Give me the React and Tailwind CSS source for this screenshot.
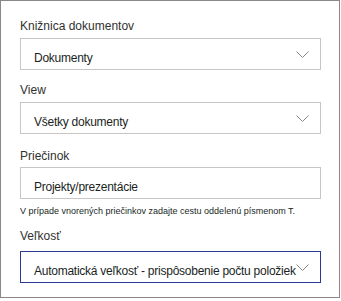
import React from 'react';

const font = { fontFamily: '"Liberation Sans", Arial, sans-serif' };

const Chevron = ({ className = '' }) => (
  <svg width="13" height="7" viewBox="0 0 13 7" className={className} aria-hidden="true">
    <path d="M0.5 0.5 L6.5 6.5 L12.5 0.5" fill="none" stroke="#8a8886" strokeWidth="1" />
  </svg>
);

const Field = ({ value, dropdown, focused }) => (
  <div
    className={`relative h-[32px] w-[301px] border bg-white pl-[13px] pt-[11px] text-[12px] leading-[16px] tracking-[-0.25px] text-[#201f1e] ${
      focused ? 'border-[#2b3990]' : 'border-[#c8c6c4]'
    }`}
  >
    <span className="whitespace-nowrap">{value}</span>
    {dropdown && <Chevron className="absolute right-[11px] top-[12px] z-10" />}
  </div>
);

export default function App() {
  return (
    <div className="bg-white" style={font}>
      <div className="flex h-[298px] w-[340px] flex-col border border-[#8a8886] pl-[19px] pt-[17px]">
        <label className="text-[12px] leading-[16px] text-[#323130]">Knižnica dokumentov</label>
        <div className="mt-[4px]">
          <Field value="Dokumenty" dropdown />
        </div>

        <label className="mt-[12px] text-[12px] leading-[16px] text-[#323130]">View</label>
        <div className="mt-[4px]">
          <Field value="Všetky dokumenty" dropdown />
        </div>

        <label className="mt-[14px] text-[12px] leading-[16px] text-[#323130]">Priečinok</label>
        <div className="mt-[3px]">
          <Field value="Projekty/prezentácie" />
        </div>
        <p className="mt-[5px] text-[9px] leading-[14px] text-[#201f1e]">
          V prípade vnorených priečinkov zadajte cestu oddelenú písmenom T.
        </p>

        <label className="mt-[10px] text-[12px] leading-[16px] text-[#323130]">Veľkosť</label>
        <div className="mt-[7px]">
          <Field value="Automatická veľkosť - prispôsobenie počtu položiek" dropdown focused />
        </div>
      </div>
    </div>
  );
}
